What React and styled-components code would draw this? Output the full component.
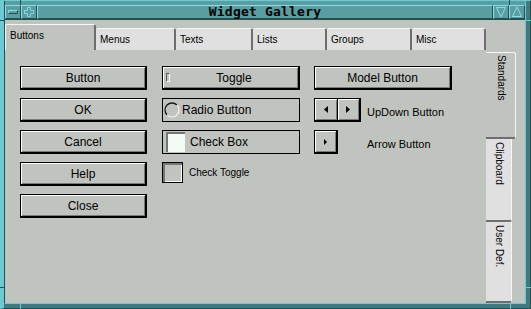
import React from "react";
import styled, { createGlobalStyle } from "styled-components";

const C = {
  cyan: "#6ccad2",
  cyanHi: "#8adde4",
  teal: "#5a9ea2",
  tealDark: "#3c7c80",
  dark: "#264f52",
  gray: "#c0c4bf",
  tab: "#e0e0e0",
  shade: "#6e6e6e",
  hi: "#f6f6f6",
};

const GlobalStyle = createGlobalStyle`
  html, body { margin: 0; padding: 0; background: ${C.gray}; }
  body { font-family: "Liberation Sans", Arial, Helvetica, sans-serif; color: #000; }
  * { box-sizing: border-box; }
`;

const Screen = styled.div`
  position: relative;
  width: 531px;
  height: 309px;
`;

const Window = styled.div`
  width: 531px;
  height: 309px;
  display: flex;
  background: ${C.tealDark};
  border-top: 1px solid ${C.cyan};
  border-left: 4px solid ${C.cyan};
  border-right: 1px solid ${C.dark};
  border-bottom: 1px solid ${C.dark};
  padding: 0 4px 4px 0;
`;

const Inner = styled.div`
  flex: 1;
  min-width: 0;
  display: flex;
  flex-direction: column;
  border-left: 1px solid ${C.dark};
  border-right: 1px solid ${C.cyan};
  border-bottom: 1px solid ${C.cyan};
`;

const TitleBar = styled.div`
  display: flex;
  height: 19px;
  padding-top: 4px;
  background: ${C.teal};
  border-bottom: 1px solid ${C.dark};
`;

const TitleButton = styled.div`
  width: 16px;
  height: 14px;
  border-style: solid;
  border-width: 1px;
  border-color: ${C.cyanHi} ${C.dark} ${C.dark} ${C.cyanHi};
  display: flex;
  align-items: center;
  justify-content: center;
`;

const TitleText = styled.div`
  flex: 1;
  height: 14px;
  border-style: solid;
  border-width: 1px;
  border-color: ${C.cyanHi} ${C.dark} ${C.dark} ${C.cyanHi};
  font-family: "DejaVu Sans Mono", "Liberation Mono", monospace;
  font-weight: bold;
  font-size: 13px;
  line-height: 12px;
  letter-spacing: 0.2px;
  text-align: center;
  color: #000;
`;

const Body = styled.div`
  flex: 1;
  display: flex;
  background: ${C.gray};
`;

const LeftPart = styled.div`
  width: 481px;
  display: flex;
  flex-direction: column;
`;

const TabStrip = styled.div`
  height: 30px;
  display: flex;
  align-items: flex-end;
`;

const Tab = styled.div`
  width: ${(p) => p.$w}px;
  height: ${(p) => (p.$active ? 26 : 22)}px;
  background: ${(p) => (p.$active ? C.gray : C.tab)};
  border-top: 1px solid ${C.hi};
  border-left: 1px solid ${(p) => (p.$active ? C.hi : C.tab)};
  border-right: 2px solid ${C.shade};
  border-radius: 2px 3px 0 0;
  padding: 5px 0 0 ${(p) => (p.$active ? 4 : 3)}px;
  font-size: 10px;
  line-height: 12px;
  white-space: nowrap;
`;

const Panel = styled.div`
  flex: 1;
  display: grid;
  grid-template-columns: 142px 152px 1fr;
  align-items: start;
  padding: 16px 0 0 15px;
`;

const Column = styled.div`
  display: flex;
  flex-direction: column;
  gap: 8px;
`;

const PushButton = styled.div`
  width: ${(p) => p.$w}px;
  height: 24px;
  background: ${C.gray};
  border: solid #000;
  border-width: 1px 2px 2px 1px;
  box-shadow: inset 1px 1px #fff, inset -1px -1px #7a7a7a;
  display: flex;
  align-items: center;
  justify-content: center;
  font-size: 12px;
  line-height: 14px;
  white-space: nowrap;
`;

const ToggleButton = styled(PushButton)`
  justify-content: flex-start;
`;

const ToggleMark = styled.span`
  width: 4px;
  height: 9px;
  margin-left: 3px;
  border-top: 1px solid #5a5a5a;
  border-left: 1px solid #5a5a5a;
  border-right: 1px solid #fff;
  border-bottom: 1px solid #fff;
`;

const ToggleLabel = styled.span`
  flex: 1;
  text-align: center;
`;

const Frame = styled.div`
  width: 138px;
  height: 24px;
  border: 1px solid #000;
  display: flex;
  align-items: center;
  font-size: 12px;
  white-space: nowrap;
`;

const RadioMark = styled.svg`
  margin-left: 1px;
  margin-right: 2px;
  flex: none;
`;

const CheckMark = styled.span`
  width: 19px;
  height: 20px;
  margin: 0 5px 0 3px;
  background: #f4faf4;
  border-top: 2px solid #767676;
  border-left: 2px solid #767676;
`;

const CheckRow = styled.div`
  height: 21px;
  display: flex;
  align-items: center;
  gap: 6px;
  font-size: 10px;
  white-space: nowrap;
`;

const CheckSquare = styled.span`
  width: 21px;
  height: 21px;
  background: ${C.gray};
  border: 1px solid #000;
  box-shadow: inset 2px 2px #777, inset -1px -1px #fff;
`;

const LabeledRow = styled.div`
  height: 24px;
  display: grid;
  grid-template-columns: 53px auto;
  align-items: center;
`;

const SideLabel = styled.span`
  font-size: 11px;
  padding-top: 4px;
  white-space: nowrap;
`;

const UpDown = styled.div`
  width: 47px;
  height: 24px;
  display: flex;
  border: solid #000;
  border-width: 1px 2px 2px 1px;
`;

const ArrowCell = styled.div`
  flex: 1;
  display: flex;
  align-items: center;
  justify-content: center;
  box-shadow: inset 1px 1px #fff, inset -1px -1px #7a7a7a;
  border-right: ${(p) => (p.$split ? "1px solid #000" : "none")};
`;

const RightPart = styled.div`
  flex: 1;
  display: flex;
  flex-direction: column;
  align-items: flex-start;
  padding-top: 32px;
`;

const VTab = styled.div`
  width: ${(p) => (p.$active ? 30 : 26)}px;
  height: ${(p) => p.$h}px;
  background: ${(p) => (p.$active ? C.gray : C.tab)};
  border-top: ${(p) => (p.$active ? `1px solid ${C.hi}` : "none")};
  border-right: 1px solid ${C.hi};
  border-bottom: 2px solid ${C.shade};
  border-radius: 0 ${(p) => (p.$active ? 3 : 0)}px 3px 0;
  display: flex;
  justify-content: center;
  padding-top: ${(p) => (p.$active ? 2 : 3)}px;
`;

const VLabel = styled.span`
  writing-mode: vertical-rl;
  font-size: 10px;
  line-height: 12px;
  white-space: nowrap;
`;

const Tick = styled.span`
  position: absolute;
  left: ${(p) => p.$x}px;
  top: ${(p) => p.$y}px;
  width: ${(p) => p.$w}px;
  height: ${(p) => p.$h}px;
  background: ${(p) => p.$c};
`;

const Arrow = ({ dir, w = 4, h = 7 }) => (
  <svg width={w} height={h} viewBox={`0 0 ${w} ${h}`}>
    {dir === "left" ? (
      <polygon points={`${w},0 ${w},${h} 0,${h / 2}`} fill="#000" />
    ) : (
      <polygon points={`0,0 0,${h} ${w},${h / 2}`} fill="#000" />
    )}
  </svg>
);

const MinusIcon = () => (
  <svg width="14" height="12" viewBox="0 0 14 12">
    <path d="M2.5 7.5 V4.5 H11.5" stroke={C.cyanHi} fill="none" />
    <path d="M11.5 4.5 V7.5 H2.5" stroke={C.dark} fill="none" />
  </svg>
);

const PlusIcon = () => (
  <svg width="14" height="12" viewBox="0 0 14 12">
    <path
      d="M5.5 10.5 V7.5 H2.5 V4.5 H5.5 V1.5 H8.5"
      stroke={C.cyanHi}
      fill="none"
    />
    <path
      d="M8.5 1.5 V4.5 H11.5 V7.5 H8.5 V10.5 H5.5"
      stroke={C.cyanHi}
      fill="none"
      opacity="0.85"
    />
  </svg>
);

const TriIcon = ({ up }) => (
  <svg width="14" height="12" viewBox="0 0 14 12">
    {up ? (
      <polygon points="7,1 2.5,10.5 11.5,10.5" stroke={C.cyanHi} fill="none" />
    ) : (
      <polygon points="2.5,1.5 11.5,1.5 7,11" stroke={C.cyanHi} fill="none" />
    )}
  </svg>
);

const topTabs = [
  { label: "Buttons", w: 91, active: true },
  { label: "Menus", w: 80 },
  { label: "Texts", w: 77 },
  { label: "Lists", w: 74 },
  { label: "Groups", w: 85 },
  { label: "Misc", w: 74 },
];

const sideTabs = [
  { label: "Standards", h: 87, active: true },
  { label: "Clipboard", h: 83 },
  { label: "User Def.", h: 81 },
];

const ticks = [
  { x: 20, y: 0, w: 1, h: 5, c: C.dark },
  { x: 509, y: 0, w: 1, h: 5, c: C.dark },
  { x: 0, y: 20, w: 4, h: 1, c: C.dark },
  { x: 0, y: 287, w: 4, h: 1, c: C.dark },
  { x: 20, y: 304, w: 1, h: 5, c: C.cyan },
  { x: 510, y: 304, w: 1, h: 5, c: C.cyan },
  { x: 526, y: 20, w: 5, h: 1, c: C.cyan },
  { x: 526, y: 287, w: 5, h: 1, c: C.cyan },
];

export default function App() {
  return (
    <>
      <GlobalStyle />
      <Screen>
        <Window>
          <Inner>
            <TitleBar>
              <TitleButton>
                <MinusIcon />
              </TitleButton>
              <TitleButton>
                <PlusIcon />
              </TitleButton>
              <TitleText>Widget Gallery</TitleText>
              <TitleButton>
                <TriIcon />
              </TitleButton>
              <TitleButton>
                <TriIcon up />
              </TitleButton>
            </TitleBar>
            <Body>
              <LeftPart>
                <TabStrip>
                  {topTabs.map((t) => (
                    <Tab key={t.label} $w={t.w} $active={t.active}>
                      {t.label}
                    </Tab>
                  ))}
                </TabStrip>
                <Panel>
                  <Column>
                    <PushButton $w={127}>Button</PushButton>
                    <PushButton $w={127}>OK</PushButton>
                    <PushButton $w={127}>Cancel</PushButton>
                    <PushButton $w={127}>Help</PushButton>
                    <PushButton $w={127}>Close</PushButton>
                  </Column>
                  <Column>
                    <ToggleButton $w={138}>
                      <ToggleMark />
                      <ToggleLabel>Toggle</ToggleLabel>
                    </ToggleButton>
                    <Frame>
                      <RadioMark width="16" height="16" viewBox="0 0 16 16">
                        <circle cx="8" cy="8" r="7" fill={C.gray} />
                        <path
                          d="M3.05 12.95 A7 7 0 0 1 12.95 3.05"
                          stroke="#1a1a1a"
                          strokeWidth="1.3"
                          fill="none"
                        />
                        <path
                          d="M12.95 3.05 A7 7 0 0 1 3.05 12.95"
                          stroke="#f4f4f4"
                          strokeWidth="1.2"
                          fill="none"
                        />
                      </RadioMark>
                      Radio Button
                    </Frame>
                    <Frame>
                      <CheckMark />
                      Check Box
                    </Frame>
                    <CheckRow>
                      <CheckSquare />
                      Check Toggle
                    </CheckRow>
                  </Column>
                  <Column>
                    <PushButton $w={138}>Model Button</PushButton>
                    <LabeledRow>
                      <UpDown>
                        <ArrowCell $split>
                          <Arrow dir="left" />
                        </ArrowCell>
                        <ArrowCell>
                          <Arrow dir="right" />
                        </ArrowCell>
                      </UpDown>
                      <SideLabel>UpDown Button</SideLabel>
                    </LabeledRow>
                    <LabeledRow>
                      <PushButton $w={24}>
                        <Arrow dir="right" w={3} h={6} />
                      </PushButton>
                      <SideLabel>Arrow Button</SideLabel>
                    </LabeledRow>
                  </Column>
                </Panel>
              </LeftPart>
              <RightPart>
                {sideTabs.map((t) => (
                  <VTab key={t.label} $h={t.h} $active={t.active}>
                    <VLabel>{t.label}</VLabel>
                  </VTab>
                ))}
              </RightPart>
            </Body>
          </Inner>
        </Window>
        {ticks.map((t, i) => (
          <Tick key={i} $x={t.x} $y={t.y} $w={t.w} $h={t.h} $c={t.c} />
        ))}
      </Screen>
    </>
  );
}
